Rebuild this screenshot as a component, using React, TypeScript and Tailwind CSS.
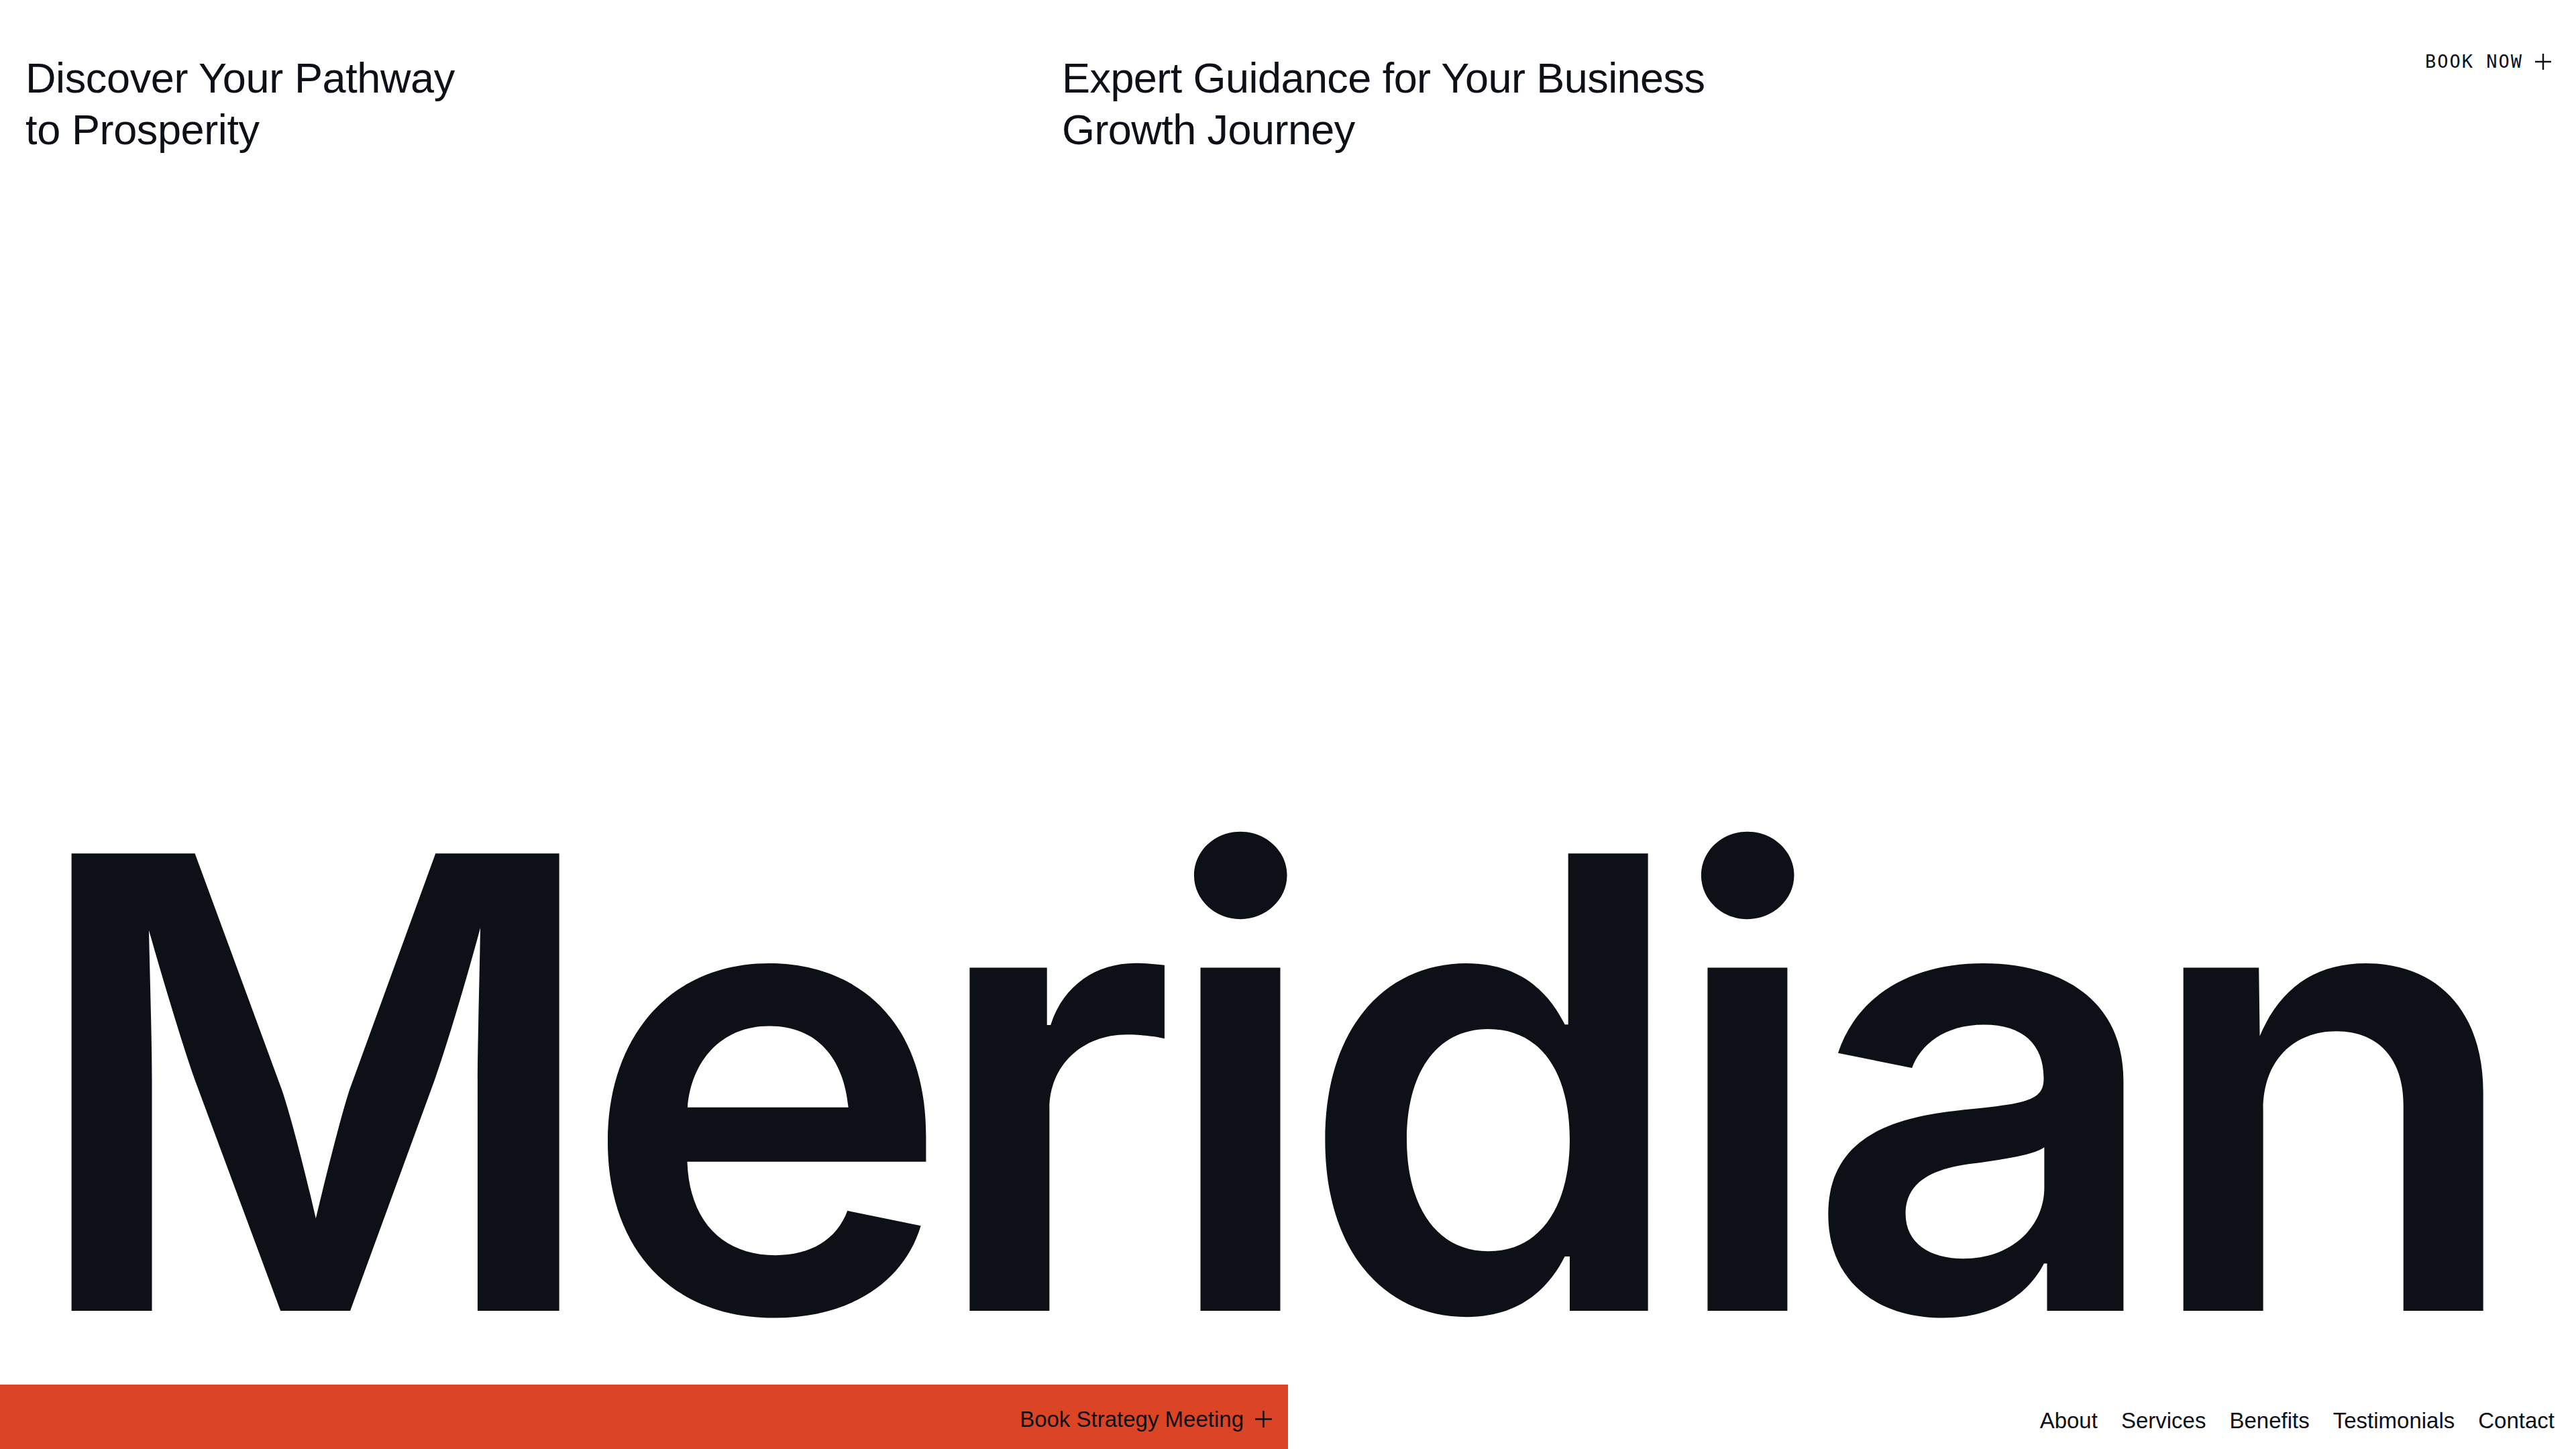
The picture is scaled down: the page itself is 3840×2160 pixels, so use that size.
import React from "react";

function Plus({ size, stroke }: { size: number; stroke: number }) {
  return (
    <svg width={size} height={size} viewBox={`0 0 ${size} ${size}`} fill="none" aria-hidden="true">
      <line x1={0} y1={size / 2} x2={size} y2={size / 2} stroke="currentColor" strokeWidth={stroke} />
      <line x1={size / 2} y1={0} x2={size / 2} y2={size} stroke="currentColor" strokeWidth={stroke} />
    </svg>
  );
}

export default function App() {
  const nav = ["About", "Services", "Benefits", "Testimonials", "Contact"];
  return (
    <div className="h-screen w-full flex flex-col bg-white text-[#0d1117] overflow-hidden font-['Liberation_Sans',Arial,sans-serif]">
      <header className="flex items-start pt-[78px] pl-[38px] pr-[37px]">
        <div className="w-[1545px] text-[63px] leading-[77px] tracking-[-0.006em]">
          Discover Your Pathway
          <br />
          to Prosperity
        </div>
        <div className="text-[63px] leading-[77px] tracking-[-0.009em]">
          Expert Guidance for Your Business
          <br />
          Growth Journey
        </div>
        <a className="ml-auto flex items-center gap-[18px] font-['DejaVu_Sans_Mono',monospace] text-[27px] leading-none tracking-[2px] uppercase">
          <span>Book Now</span>
          <Plus size={24} stroke={2.5} />
        </a>
      </header>

      <div className="flex-1" />

      <h1 className="pl-[38px] mb-[75px] whitespace-nowrap font-['Inter',sans-serif] font-semibold text-[937px] leading-[0.8] tracking-[-0.0395em]">
        Meridian
      </h1>

      <footer className="flex h-[96px] items-stretch">
        <a className="w-1/2 bg-[#db4425] flex items-center justify-end gap-[17px] pr-[24px] pt-[6px] text-[33px] leading-none">
          <span>Book Strategy Meeting</span>
          <Plus size={25} stroke={2.5} />
        </a>
        <nav className="flex-1 flex items-center justify-end gap-[35px] pr-[32px] pt-[10px] text-[33px] leading-none">
          {nav.map((n) => (
            <a key={n}>{n}</a>
          ))}
        </nav>
      </footer>
    </div>
  );
}
